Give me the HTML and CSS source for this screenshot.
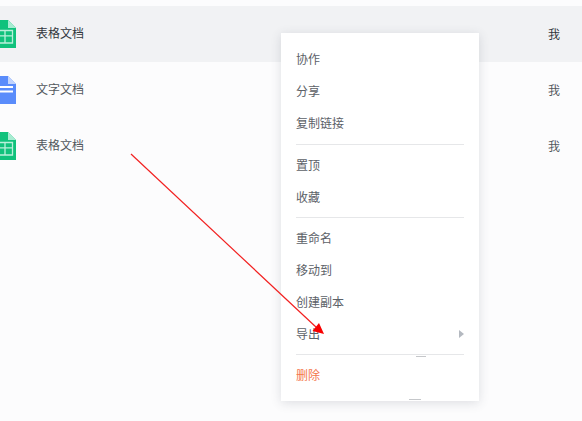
FILE: index.html
```html
<!DOCTYPE html>
<html lang="zh">
<head>
<meta charset="utf-8">
<title>文档列表</title>
<link rel="stylesheet" href="styles.css">
</head>
<body>
<main class="list">
  <div class="row row-active">
    <svg class="file-icon" viewBox="0 0 22 28"><path d="M0 0H14L22 8V28H0Z" fill="#10c27c"/><path d="M14 0L22 8H14Z" fill="#a8ecd2"/><path d="M0 10.5H18.5V23H0ZM0 15.8H18.5M11 10.5V23" fill="none" stroke="#b9f0da" stroke-width="1.3"/></svg>
    <span class="name">表格文档</span>
    <span class="owner">我</span>
  </div>
  <div class="row">
    <svg class="file-icon" viewBox="0 0 22 28"><path d="M0 0H14L22 8V28H0Z" fill="#5a8cfb"/><path d="M14 0L22 8H14Z" fill="#c2d4fc"/><path d="M0 11H19M0 15.5H19" stroke="#fff" stroke-width="2"/></svg>
    <span class="name">文字文档</span>
    <span class="owner">我</span>
  </div>
  <div class="row">
    <svg class="file-icon" viewBox="0 0 22 28"><path d="M0 0H14L22 8V28H0Z" fill="#10c27c"/><path d="M14 0L22 8H14Z" fill="#a8ecd2"/><path d="M0 10.5H18.5V23H0ZM0 15.8H18.5M11 10.5V23" fill="none" stroke="#b9f0da" stroke-width="1.3"/></svg>
    <span class="name">表格文档</span>
    <span class="owner">我</span>
  </div>
</main>

<nav class="menu">
  <div class="group group-first">
    <div class="item">协作</div>
    <div class="item">分享</div>
    <div class="item">复制链接</div>
  </div>
  <div class="group">
    <div class="item">置顶</div>
    <div class="item">收藏</div>
  </div>
  <div class="group">
    <div class="item">重命名</div>
    <div class="item">移动到</div>
    <div class="item">创建副本</div>
    <div class="item item-more">导出<span class="caret"></span></div>
  </div>
  <div class="group group-last">
    <div class="item item-danger">删除</div>
  </div>
  <span class="speck speck-a"></span>
  <span class="speck speck-b"></span>
</nav>

<svg class="annotation" viewBox="0 0 582 421">
  <path d="M131 154L317 328" stroke="#f22020" stroke-width="1.2" fill="none"/>
  <path d="M324 334L312.500 331L319 323Z" fill="#f80000"/>
</svg>
</body>
</html>
```

FILE: styles.css
```css
* { box-sizing: border-box; }

html, body {
  margin: 0;
  height: 100%;
}

body {
  position: relative;
  overflow: hidden;
  background: #fcfcfd;
  font-family: "Noto Sans CJK SC", "Liberation Sans", sans-serif;
  font-size: 12px;
  color: #53585e;
}

.list {
  padding-top: 6px;
}

.row {
  display: flex;
  align-items: center;
  height: 56px;
  padding: 0 22px 0 0;
}

.row-active {
  background: #f1f2f4;
  color: #33373c;
}

.file-icon {
  flex: none;
  width: 22px;
  height: 28px;
  margin-left: -6px;
  margin-right: 20px;
}

.name {
  flex: 1;
  line-height: 14px;
  margin-bottom: 2px;
}

.owner {
  flex: none;
  line-height: 14px;
  margin-bottom: 0;
}

.menu {
  position: absolute;
  left: 281px;
  top: 33px;
  width: 198px;
  height: 368px;
  padding: 0 15px;
  background: #fff;
  box-shadow: 0 2px 10px rgba(60, 70, 85, 0.16);
}

.group {
  padding: 4px 0;
  border-bottom: 1px solid #e6e7e9;
}

.group-first {
  padding: 10px 0 5px;
}

.group-last {
  border-bottom: 0;
}

.item {
  position: relative;
  height: 32px;
  line-height: 31px;
  font-size: 12px;
  color: #5c6167;
}

.item-danger {
  color: #f4764a;
}

.caret {
  position: absolute;
  right: 0;
  top: 12px;
  border-left: 5px solid #b4b9c0;
  border-top: 4px solid transparent;
  border-bottom: 4px solid transparent;
}

.speck {
  position: absolute;
  height: 1px;
  background: #c5c7ca;
}

.speck-a {
  left: 135px;
  top: 323px;
  width: 10px;
}

.speck-b {
  left: 128px;
  top: 366px;
  width: 12px;
}

.annotation {
  position: absolute;
  left: 0;
  top: 0;
  width: 582px;
  height: 421px;
  pointer-events: none;
}
```
